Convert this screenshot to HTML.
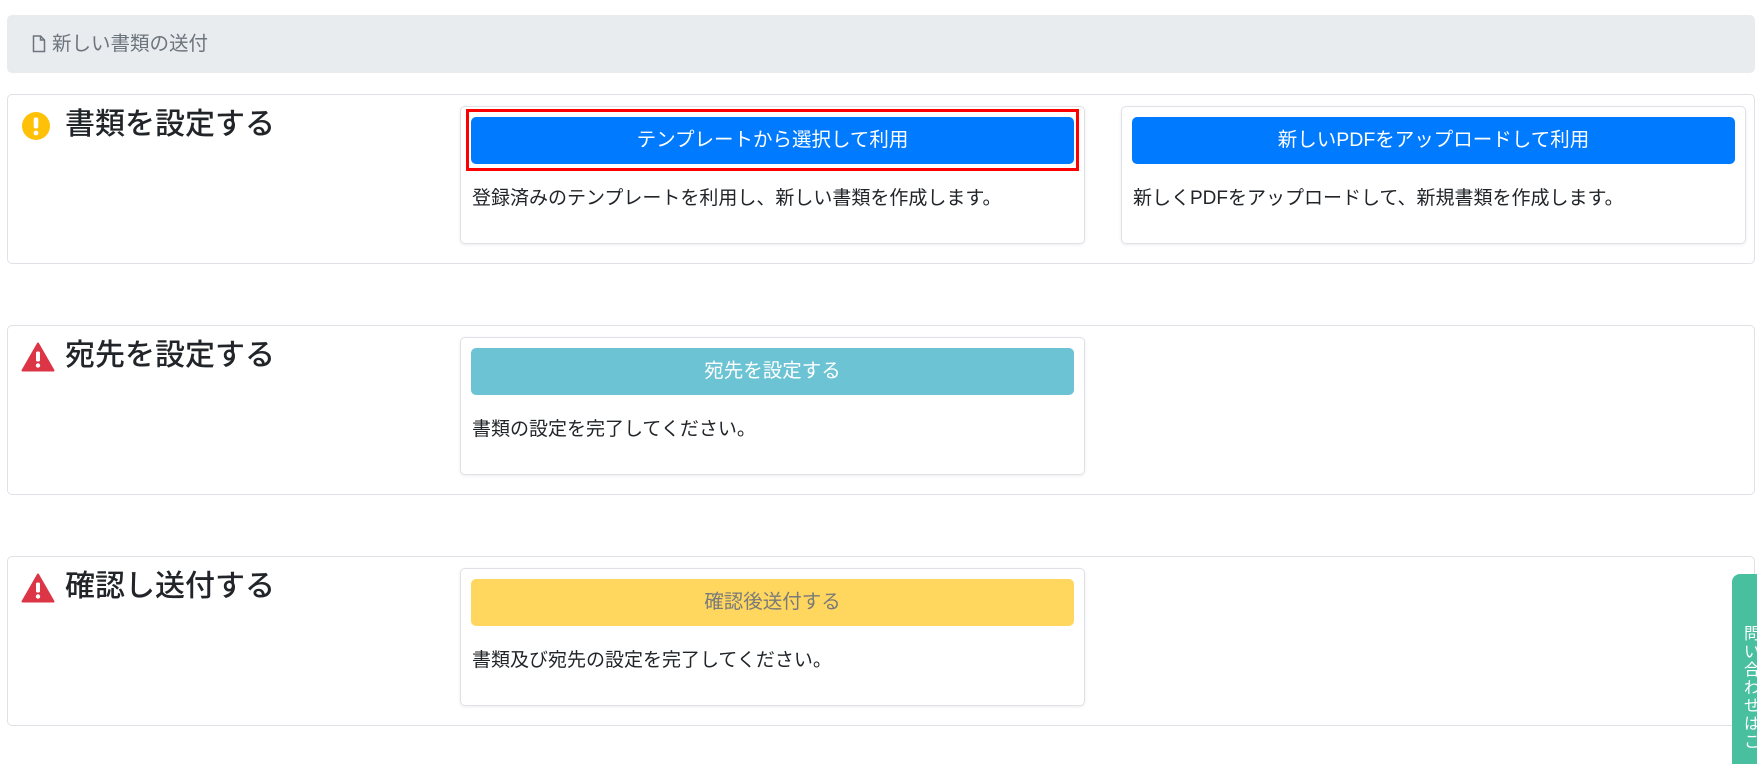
<!DOCTYPE html>
<html><head><meta charset="utf-8"><style>
*{box-sizing:border-box;margin:0;padding:0}
body{width:1757px;height:754px;overflow:hidden;background:#fff;font-family:"Liberation Sans","Noto Sans CJK JP",sans-serif;color:#212529;position:relative}
.bc{position:absolute;left:7px;top:15px;width:1748px;height:58px;background:#e9ecef;border-radius:5px;color:#6c757d;font-size:19.5px;line-height:58px;padding-left:45px}
.bc svg{position:absolute;left:25px;top:20px}
.card{position:absolute;left:7px;width:1748px;height:170px;border:1px solid #dee2e6;border-radius:5px}
.h{position:absolute;left:57px;top:10px;font-size:30px;line-height:40px;font-weight:500}
.ic{position:absolute;left:13px;top:16px}
.in{position:absolute;top:11px;height:138px;border:1px solid #dee2e6;border-radius:5px;box-shadow:0 1px 3px rgba(0,0,0,.08)}
.btn{position:absolute;left:10px;right:10px;top:10px;height:47px;border-radius:5px;color:#fff;font-size:19.5px;text-align:center;line-height:47px}
.red{position:absolute;left:5px;right:5px;top:2px;height:62px;border:3.5px solid #f00}
.t{position:absolute;left:11px;top:79px;font-size:19px;line-height:26px}
.tab{position:absolute;left:1732px;top:574px;height:190px;width:30px;background:#48c0a0;border-radius:8px 0 0 0;color:#fff;font-size:16px;line-height:18px;padding:52px 0 0 12px}
</style></head><body>
<div class="bc"><svg width="14" height="18" viewBox="0 0 14 18"><path d="M1.5 1h7l4 4v11.5h-11z M8.5 1v4h4" fill="none" stroke="#6c757d" stroke-width="1.5"/></svg>新しい書類の送付</div>

<div class="card" style="top:94px">
<svg class="ic" width="30" height="30" viewBox="0 0 30 30"><circle cx="15" cy="15" r="14" fill="#ffc107"/><rect x="12.7" y="6.5" width="4.6" height="11" rx="2" fill="#fff"/><circle cx="15" cy="22" r="2.4" fill="#fff"/></svg>
<div class="h">書類を設定する</div>
<div class="in" style="left:452px;width:625px"><div class="red"></div><div class="btn" style="background:#007bff">テンプレートから選択して利用</div><div class="t">登録済みのテンプレートを利用し、新しい書類を作成します。</div></div>
<div class="in" style="left:1113px;width:625px"><div class="btn" style="background:#007bff">新しいPDFをアップロードして利用</div><div class="t">新しくPDFをアップロードして、新規書類を作成します。</div></div>
</div>

<div class="card" style="top:325px">
<svg class="ic" width="34" height="30" viewBox="0 0 34 30"><path d="M17 1.5 L32.5 28.5 H1.5Z" fill="#dc3545" stroke="#dc3545" stroke-width="2" stroke-linejoin="round"/><rect x="15" y="9.5" width="4" height="10" rx="1.5" fill="#fff"/><circle cx="17" cy="23.5" r="2.2" fill="#fff"/></svg>
<div class="h">宛先を設定する</div>
<div class="in" style="left:452px;width:625px"><div class="btn" style="background:#6bc3d4">宛先を設定する</div><div class="t">書類の設定を完了してください。</div></div>
</div>

<div class="card" style="top:556px">
<svg class="ic" width="34" height="30" viewBox="0 0 34 30"><path d="M17 1.5 L32.5 28.5 H1.5Z" fill="#dc3545" stroke="#dc3545" stroke-width="2" stroke-linejoin="round"/><rect x="15" y="9.5" width="4" height="10" rx="1.5" fill="#fff"/><circle cx="17" cy="23.5" r="2.2" fill="#fff"/></svg>
<div class="h">確認し送付する</div>
<div class="in" style="left:452px;width:625px"><div class="btn" style="background:#ffd75f;color:#7a7a7a">確認後送付する</div><div class="t">書類及び宛先の設定を完了してください。</div></div>
</div>

<div class="tab">問<br>い<br>合<br>わ<br>せ<br>は<br>こ</div>
</body></html>
